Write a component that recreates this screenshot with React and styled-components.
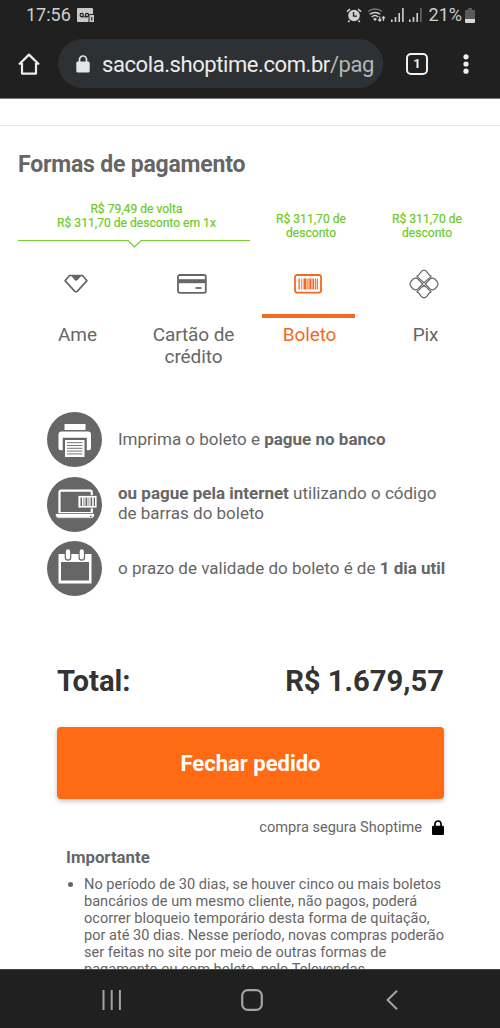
import React from 'react'
import styled, { createGlobalStyle } from 'styled-components'


const GlobalStyle = createGlobalStyle`
  * {
    box-sizing: border-box;
  }

  body {
    margin: 0;
    background: #fff;
    font-family: Roboto, "Liberation Sans", sans-serif;
  }

  svg {
    display: block;
    flex: none;
  }
`;

const StatusBar = () => (
  <StatusWrapper>
    <Clock>17:56</Clock>
    <svg width="18" height="15" viewBox="0 0 18 15">
      <path d="M1 0h14a1 1 0 0 1 1 1v5h-3a2 2 0 0 0-1.500 2v6H1a1 1 0 0 1-1-1V1a1 1 0 0 1 1-1z" fill="#c9c9c9" />
      <circle cx="4.700" cy="7" r="1.600" fill="none" stroke="#202020" strokeWidth="1.200" />
      <circle cx="10" cy="7" r="1.600" fill="none" stroke="#202020" strokeWidth="1.200" />
      <path d="M4.500 8.900h6" stroke="#202020" strokeWidth="1" />
      <path d="M12.500 7h4.500v7h-4.500z" fill="#c9c9c9" />
      <path d="M14.800 9v3.500" stroke="#202020" strokeWidth="1.200" />
    </svg>
    <StatusIcons>
      <svg width="16" height="15" viewBox="0 0 16 15">
        <circle cx="8" cy="7.500" r="5.800" fill="#d0d0d0" />
        <path d="M1 3.600L4 1M15 3.600L12 1M3.500 12.500L2.200 14M12.500 12.500l1.300 1.500" stroke="#d0d0d0" strokeWidth="1.600" fill="none" />
        <path d="M7.500 4v4.200h3.500" stroke="#202020" strokeWidth="1.300" fill="none" />
      </svg>
      <svg width="19" height="15" viewBox="0 0 19 15">
        <path d="M1 3.500a11 11 0 0 1 14 0" stroke="#777" strokeWidth="1.400" fill="none" />
        <path d="M2.800 6.300a8 8 0 0 1 10.400 0M4.700 9a5 5 0 0 1 6.600 0" stroke="#d0d0d0" strokeWidth="1.500" fill="none" />
        <path d="M6 11a3 3 0 0 1 4 0l-2 2z" fill="#d0d0d0" />
        <path d="M12.800 8.500v4.500M11.300 11.500l1.500 1.700 1.500-1.700M16.500 13V8.800M15 10.300l1.500-1.700 1.500 1.700" stroke="#d0d0d0" strokeWidth="1.200" fill="none" />
      </svg>
      <Signal />
      <Signal weak />
      <Percent>21%</Percent>
      <svg width="10" height="15" viewBox="0 0 10 15">
        <path d="M3 0h4v2h2a1 1 0 0 1 1 1v8H0V3a1 1 0 0 1 1-1h2z" fill="#5a5a5a" />
        <path d="M0 11h10v3a1 1 0 0 1-1 1H1a1 1 0 0 1-1-1z" fill="#d8d8d8" />
      </svg>
    </StatusIcons>
  </StatusWrapper>
)

const Signal = ({ weak }) => (
  <svg width="13" height="14" viewBox="0 0 13 14">
    <path d="M0 11.500h1.600V14H0zM3.700 9h1.600v5H3.700zM7.400 5H9v9H7.400z" fill="#d0d0d0" />
    <path d="M11.100 0h1.600v14h-1.600z" fill={weak ? '#666' : '#d0d0d0'} />
  </svg>
)

const BrowserBar = () => (
  <BrowserWrapper>
    <svg width="22" height="22" viewBox="0 0 22 22">
      <path d="M1 11.500L11 1.600l10 9.900M4 10v10.600h14V10" fill="none" stroke="#ececec" strokeWidth="2.200" strokeLinejoin="round" />
    </svg>
    <UrlBox>
      <svg width="14" height="18" viewBox="0 0 14 18">
        <path d="M3.500 8V4.500a3.500 3.500 0 0 1 7 0V8" fill="none" stroke="#e6e6e6" strokeWidth="1.700" />
        <rect x="0.300" y="6.500" width="13.400" height="11" rx="1.500" fill="#e6e6e6" />
      </svg>
      <Url>sacola.shoptime.com.br<span>/pag</span></Url>
    </UrlBox>
    <TabCount>1</TabCount>
    <svg width="6" height="20" viewBox="0 0 6 20">
      <circle cx="3" cy="2.800" r="2.600" fill="#f0f0f0" />
      <circle cx="3" cy="10" r="2.600" fill="#f0f0f0" />
      <circle cx="3" cy="17.200" r="2.600" fill="#f0f0f0" />
    </svg>
  </BrowserWrapper>
)

const AmeIcon = () => (
  <svg width="26" height="20" viewBox="0 0 26 20">
    <path d="M6.500 1.500h13l4.500 5.200-9.800 10.600a1.600 1.600 0 0 1-2.400 0L2 6.700z" fill="none" stroke="#666" strokeWidth="1.700" strokeLinejoin="round" />
    <path d="M8 1.500h10.500l-3.600 4.200a2.400 2.400 0 0 1-3.500 0z" fill="#666" />
  </svg>
)

const CardIcon = () => (
  <svg width="30" height="20" viewBox="0 0 30 20">
    <rect x="1" y="1" width="27.800" height="17.800" rx="1.800" fill="none" stroke="#666" strokeWidth="1.800" />
    <path d="M1 5.200h28v4H1z" fill="#666" />
    <path d="M18.500 14h6" stroke="#666" strokeWidth="1.800" />
  </svg>
)

const BoletoIcon = () => (
  <svg width="28" height="20" viewBox="0 0 28 20">
    <rect x="1" y="1" width="26" height="17.600" rx="2" fill="none" stroke="#f26a21" strokeWidth="1.800" />
    <path d="M4.500 4.500h1.300v11H4.500zM7.300 4.500h.9v11h-.9zM9.500 4.500h3v11h-3zM13.400 4.500h1.100v11h-1.100zM15.300 4.500h2.200v11h-2.200zM18.400 4.500h1.800v11h-1.800zM21 4.500h.9v11H21zM22.700 4.500h1.200v11h-1.200z" fill="#f26a21" />
  </svg>
)

const PixIcon = () => (
  <svg width="30" height="30" viewBox="0 0 30 30" fill="none" stroke="#666" strokeWidth="1.200" strokeLinejoin="round">
    {[0, 180].map((angle) => (
      <g key={angle} transform={`rotate(${angle} 15 15)`}>
        <path d="M15 13.800L7.800 7.400C9.600 6.800 10.400 5 12.100 2.800c1.800-2.200 4-2.200 5.800 0 1.700 2.200 2.500 4 4.300 4.600z" />
        <path d="M13.600 15L9.200 10.400Q6.800 8.200 4.200 9.900L1.900 12.500Q.2 15 1.900 17.500l2.300 2.600Q6.800 21.800 9.200 19.600z" />
      </g>
    ))}
  </svg>
)

const PrinterIcon = () => (
  <svg width="55" height="55" viewBox="0 0 55 55">
    <circle cx="27.500" cy="27.500" r="27.500" fill="#666" />
    <path d="M17.500 12h21v6h-21z" fill="#fff" />
    <path d="M14 19.500h27a3 3 0 0 1 3 3v13.300a2.500 2.500 0 0 1-2.500 2.500h-1.700V25.700H15.700v12.600H14a2.500 2.500 0 0 1-2.500-2.500V22.500a3 3 0 0 1 3-3z" fill="#fff" />
    <path d="M18 28h19.500v17H18z" fill="#fff" />
    <path d="M20 30.700h15.500M20 33.500h15.500M20 36.300h15.500M20 39.100h15.500M20 41.900h15.500" stroke="#666" strokeWidth="0.900" />
  </svg>
)

const LaptopIcon = () => (
  <svg width="55" height="55" viewBox="0 0 55 55">
    <circle cx="27.500" cy="27.500" r="27.500" fill="#666" />
    <path d="M12.500 36V15.200a1.500 1.500 0 0 1 1.500-1.500h29.300a1.500 1.500 0 0 1 1.500 1.500V36z" fill="#666" stroke="#fff" strokeWidth="2.200" />
    <path d="M8.500 36.500h39v1.800q-.3 2.900-2.800 2.900H11.300q-2.500 0-2.800-2.900z" fill="#fff" stroke="#666" strokeWidth="0.800" />
    <path d="M43 39.300h1.600" stroke="#666" strokeWidth="1.300" />
    <path d="M31 18.500h19v12.500H31z" fill="#fff" stroke="#666" strokeWidth="0.800" />
    <path d="M33.500 20.500h1.500v8.500h-1.500zM36.500 20.500h.8v8.500h-.8zM38.500 20.500h1.800v8.500h-1.800zM41.600 20.500h.7v8.500h-.7zM43.600 20.500h1.500v8.500h-1.500zM46.700 20.500h1.300v8.500h-1.300z" fill="#666" />
  </svg>
)

const CalendarIcon = () => (
  <svg width="55" height="55" viewBox="0 0 55 55">
    <circle cx="27.500" cy="27.500" r="27.500" fill="#666" />
    <path d="M11.500 13h33v29.500h-33z" fill="#fff" />
    <path d="M14 21h28v18.500H14z" fill="#666" />
    <path d="M21 10.500v6M34.800 10.500v6" stroke="#666" strokeWidth="6.600" strokeLinecap="round" />
    <path d="M21 10.400v6M34.800 10.400v6" stroke="#fff" strokeWidth="4.200" strokeLinecap="round" />
  </svg>
)

const tabs = [
  { label: 'Ame', icon: <AmeIcon /> },
  { label: 'Cartão de crédito', icon: <CardIcon /> },
  { label: 'Boleto', icon: <BoletoIcon />, active: true },
  { label: 'Pix', icon: <PixIcon /> },
]

const App = () => {
  return (
    <Screen>
      <GlobalStyle />
      <StatusBar />
      <BrowserBar />

      <Page>
        <TopStrip />
        <Title>Formas de pagamento</Title>

        <Discounts>
          <WideDiscount>
            R$ 79,49 de volta<br />R$ 311,70 de desconto em 1x
            <svg width="232" height="10" viewBox="0 0 232 10">
              <path d="M0 1.500h110l6.500 6.500 6.500-6.500h109" fill="none" stroke="#78ca33" strokeWidth="1.200" />
            </svg>
          </WideDiscount>
          <Discount>R$ 311,70 de<br />desconto</Discount>
          <Discount>R$ 311,70 de<br />desconto</Discount>
        </Discounts>

        <Tabs>
          {tabs.map((tab) => (
            <Tab key={tab.label} $active={tab.active}>
              <TabIcon $active={tab.active}>{tab.icon}</TabIcon>
              <TabLabel>{tab.label}</TabLabel>
            </Tab>
          ))}
        </Tabs>

        <Steps>
          <Step>
            <PrinterIcon />
            <p>Imprima o boleto e <b>pague no banco</b></p>
          </Step>
          <Step>
            <LaptopIcon />
            <p><b>ou pague pela internet</b> utilizando o código<br />de barras do boleto</p>
          </Step>
          <Step>
            <CalendarIcon />
            <p>o prazo de validade do boleto é de <b>1 dia util</b></p>
          </Step>
        </Steps>

        <Total>
          <span>Total:</span>
          <span>R$ 1.679,57</span>
        </Total>
        <OrderButton>Fechar pedido</OrderButton>
        <Secure>
          compra segura Shoptime
          <svg width="12" height="15" viewBox="0 0 12 15">
            <path d="M3 7V4a3 3 0 0 1 6 0v3" fill="none" stroke="#000" strokeWidth="1.700" />
            <rect y="5.800" width="12" height="9.200" rx="1.200" fill="#000" />
          </svg>
        </Secure>

        <Notice>
          <h3>Importante</h3>
          <ul>
            <li>
              No período de 30 dias, se houver cinco ou mais boletos<br />
              bancários de um mesmo cliente, não pagos, poderá<br />
              ocorrer bloqueio temporário desta forma de quitação,<br />
              por até 30 dias. Nesse período, novas compras poderão<br />
              ser feitas no site por meio de outras formas de<br />
              pagamento ou com boleto, pelo Televendas.
            </li>
          </ul>
        </Notice>
      </Page>

      <NavBar>
        <svg width="20" height="20" viewBox="0 0 20 20">
          <path d="M1.500 0v20M9.700 0v20M17.900 0v20" stroke="#a3a3a3" strokeWidth="2" />
        </svg>
        <svg width="22" height="22" viewBox="0 0 22 22">
          <rect x="1.200" y="1.200" width="19.600" height="19.600" rx="5.500" fill="none" stroke="#a3a3a3" strokeWidth="2.200" />
        </svg>
        <svg width="12" height="20" viewBox="0 0 12 20">
          <path d="M11 0.800L1.600 10l9.400 9.200" fill="none" stroke="#a3a3a3" strokeWidth="2" />
        </svg>
      </NavBar>
    </Screen>
  )
}

const Screen = styled.div`
  width: 500px;
  height: 1028px;
  display: flex;
  flex-direction: column;
  overflow: hidden;
  white-space: nowrap;
  color: #666;
`;

const StatusWrapper = styled.div`
  height: 30px;
  flex: none;
  display: flex;
  align-items: center;
  padding: 0 25px 0 26px;
  background: #202020;
`;

const Clock = styled.span`
  width: 51px;
  font-size: 18px;
  line-height: 30px;
  color: #cfcfcf;
`;

const StatusIcons = styled.div`
  margin-left: auto;
  display: flex;
  align-items: center;
  gap: 5px;
`;

const Percent = styled.span`
  margin: 0 -2px 0 2px;
  font-size: 18px;
  line-height: 30px;
  color: #cfcfcf;
`;

const BrowserWrapper = styled.div`
  height: 69px;
  flex: none;
  display: flex;
  align-items: center;
  padding: 0 31px 1px 18px;
  background: #202020;
  border-bottom: 1px solid #777;
`;

const UrlBox = styled.div`
  width: 325px;
  height: 49px;
  margin-left: 18px;
  padding-left: 18px;
  display: flex;
  align-items: center;
  gap: 12px;
  background: #2e3134;
  border-radius: 25px;
`;

const Url = styled.span`
  padding-top: 1px;
  font-size: 22px;
  letter-spacing: -0.420px;
  color: #ececec;

  span {
    color: #b5b6b7;
  }
`;

const TabCount = styled.div`
  width: 22px;
  height: 22px;
  margin: 0 35px 0 23px;
  border: 2px solid #f0f0f0;
  border-radius: 5px;
  color: #f0f0f0;
  font-size: 13px;
  font-weight: 700;
  line-height: 18px;
  text-align: center;
`;

const Page = styled.main`
  flex: 1;
  min-height: 0;
  overflow: hidden;
  background: #fff;
`;

const TopStrip = styled.div`
  height: 27px;
  border-bottom: 1px solid #e6e6e6;
`;

const Title = styled.h1`
  margin: 23px 0 0 18px;
  font-size: 23px;
  letter-spacing: -0.200px;
  line-height: 32px;
  font-weight: 700;
`;

const Discounts = styled.div`
  display: grid;
  grid-template-columns: 232px 116px 116px;
  height: 47px;
  margin: 21px 18px 0;
  color: #6fc928;
  font-size: 12.100px;
  -webkit-text-stroke: 0.200px #6fc928;
  line-height: 14px;
  text-align: center;
`;

const WideDiscount = styled.div`
  padding-left: 5px;

  svg {
    margin: 9px 0 0 -5px;
  }
`;

const Discount = styled.div`
  padding: 10px 0 0 6px;
`;

const Tabs = styled.div`
  display: grid;
  grid-template-columns: repeat(4, 116px);
  margin: 0 18px;
`;

const Tab = styled.div`
  display: flex;
  flex-direction: column;
  align-items: center;
  color: ${(props) => (props.$active ? '#f26a21' : '#666')};
`;

const TabIcon = styled.div`
  width: 93px;
  height: 69px;
  padding-top: 5px;
  display: flex;
  align-items: center;
  justify-content: center;
  border-bottom: 4px solid ${(props) => (props.$active ? '#f26a21' : 'transparent')};
`;

const TabLabel = styled.div`
  width: 100px;
  margin-top: 6px;
  padding-left: 3px;
  font-size: 19px;
  letter-spacing: -0.100px;
  line-height: 22px;
  text-align: center;
  white-space: normal;
`;

const Steps = styled.div`
  display: flex;
  flex-direction: column;
  gap: 9.500px;
  margin: 44px 0 0 47px;
`;

const Step = styled.div`
  display: flex;
  align-items: center;
  gap: 16px;
  height: 55px;
  font-size: 17px;
  line-height: 20px;

  p {
    margin: 0;
    padding-bottom: 2px;
  }
`;

const Total = styled.div`
  display: flex;
  justify-content: space-between;
  margin: 64px 56px 0 57px;
  color: #333;
  font-size: 29.200px;
  font-weight: 700;
  line-height: 42px;
`;

const OrderButton = styled.button`
  display: block;
  width: 387px;
  height: 72px;
  margin: 25px 0 0 57px;
  border: none;
  border-radius: 4px;
  background: #ff6b15;
  color: #fff;
  font-family: inherit;
  font-size: 22px;
  font-weight: 700;
  box-shadow: 0 2px 5px rgba(0, 0, 0, 0.250);
`;

const Secure = styled.div`
  display: flex;
  align-items: center;
  justify-content: flex-end;
  gap: 10px;
  height: 20px;
  margin: 18px 56px 0 0;
  font-size: 14.570px;
`;

const Notice = styled.section`
  margin: 10px 0 0 66px;

  h3 {
    margin: 0;
    font-size: 16.800px;
    line-height: 20px;
  }

  ul {
    margin: 9px 0 0;
    padding-left: 18px;
    font-size: 14.570px;
    line-height: 17.100px;
  }
`;

const NavBar = styled.nav`
  height: 59px;
  flex: none;
  display: flex;
  align-items: center;
  gap: 119px;
  padding: 2px 0 0 102px;
  background: #202020;
  border-top: 1px solid #444;

  svg:last-child {
    margin-left: 4px;
  }
`;

export default App;
